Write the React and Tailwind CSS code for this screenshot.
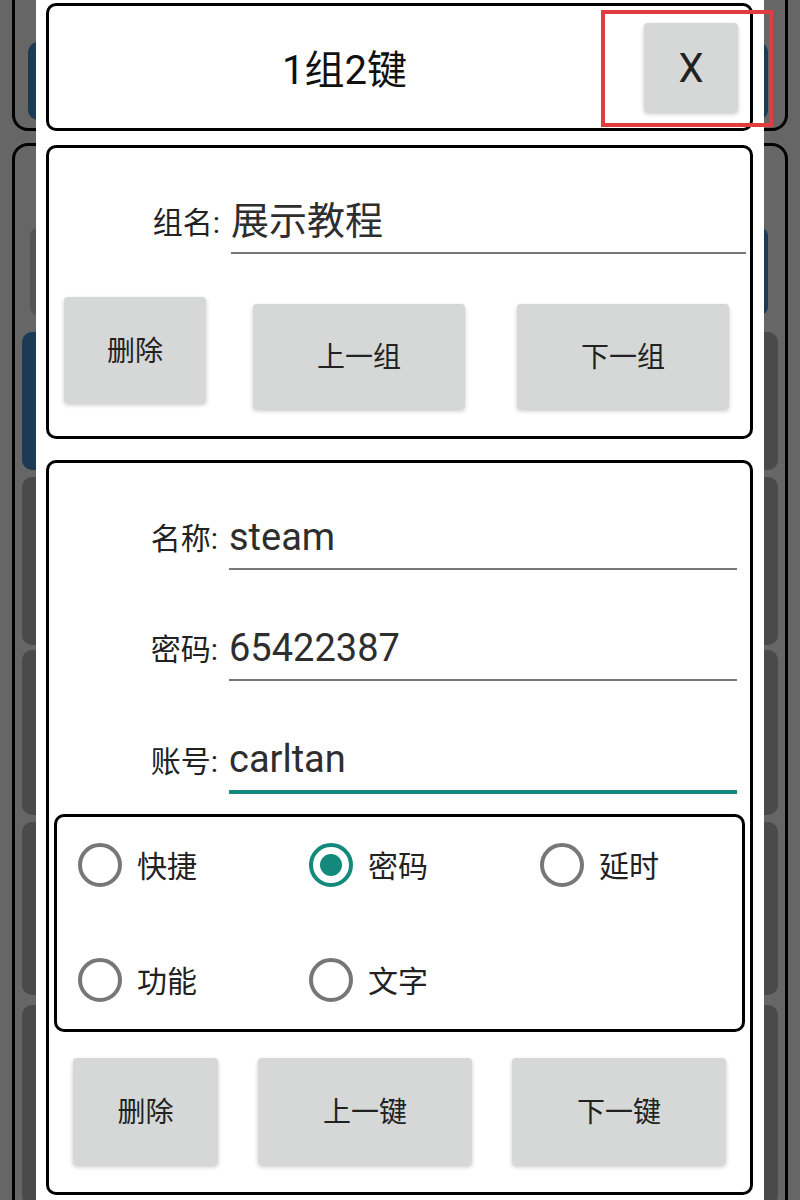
const font = "font-['Roboto','Noto_Sans_CJK_SC',sans-serif]";

function GrayButton({ className = '', children }) {
  return (
    <div
      className={`flex items-center justify-center rounded-[4px] bg-[#d6d8d7] pt-[3px] text-[28px] text-[#222] shadow-[0_2px_4px_rgba(0,0,0,0.22)] ${className}`}
    >
      {children}
    </div>
  );
}

function Field({ label, value, labelW, inputMr, active = false, className = '' }) {
  return (
    <div className={`flex ${active ? 'h-[74px]' : 'h-[72px]'} ${className}`}>
      <div className="flex items-center justify-end pt-[8px] text-[30px] text-[#222]" style={{ width: labelW }}>
        {label}:
      </div>
      <div
        className={`ml-[11px] flex flex-1 items-center pt-[8px] text-[38px] text-[#2e2e2e] ${
          active ? 'border-b-4 border-[#13897b]' : 'border-b-2 border-[#777]'
        }`}
        style={{ marginRight: inputMr }}
      >
        {value}
      </div>
    </div>
  );
}

function Radio({ label, checked = false }) {
  return (
    <div className="flex h-[44px] items-center">
      <div
        className={`flex h-[44px] w-[44px] items-center justify-center rounded-full border-4 ${
          checked ? 'border-[#13897b]' : 'border-[#777]'
        }`}
      >
        {checked && <div className="h-[22px] w-[22px] rounded-full bg-[#13897b]" />}
      </div>
      <span className="ml-[15px] pt-[2px] text-[30px] text-[#222]">{label}</span>
    </div>
  );
}

// dimmed page that sits behind the dialog
function BackgroundPage() {
  return (
    <div className="flex flex-col px-[12px]">
      <div className="mt-[-20px] flex h-[151px] gap-5 rounded-[16px] border-[3px] border-black pl-[13px] pr-[17px] pt-[59px]">
        <div className="h-[78px] flex-1 rounded-[10px] bg-[#1b3a56]" />
        <div className="h-[78px] flex-1 rounded-[10px] bg-[#1b3a56]" />
      </div>
      <div className="mt-[12px] flex h-[1100px] flex-col rounded-[16px] border-[3px] border-black px-[7px] pt-[82px]">
        <div className="flex h-[87px] gap-5 pl-[8px] pr-[10px]">
          <div className="flex-1 rounded-[8px] bg-[#555]" />
          <div className="flex-1 rounded-[8px] bg-[#1b3a56]" />
        </div>
        <div className="mt-[17px] flex h-[138px] gap-5">
          <div className="flex-1 rounded-[10px] bg-[#1b3a56]" />
          <div className="flex-1 rounded-[10px] bg-[#4b4a49]" />
        </div>
        <div className="mt-[7px] h-[168px] rounded-[10px] bg-[#4b4a49]" />
        <div className="mt-[5px] h-[165px] rounded-[10px] bg-[#4b4a49]" />
        <div className="mt-[7px] h-[173px] rounded-[10px] bg-[#4b4a49]" />
        <div className="mt-[10px] h-[200px] rounded-[10px] bg-[#4b4a49]" />
      </div>
    </div>
  );
}

export default function App() {
  return (
    <div className={`relative h-[1200px] w-[800px] overflow-hidden bg-[#666] ${font}`}>
      <BackgroundPage />

      {/* dialog */}
      <div className="absolute left-[36px] top-0 flex h-[1200px] w-[728px] flex-col bg-white pl-[10px] pr-[11px] pt-[3px]">
        {/* title bar */}
        <div className="flex h-[128px] items-center rounded-[10px] border-[3px] border-black">
          <div className="flex flex-1 justify-center pt-[7px] text-[40px] text-[#111]">1组2键</div>
          <GrayButton className="ml-1 mr-[12px] h-[89px] w-[94px] !text-[40px]">X</GrayButton>
        </div>

        {/* group card */}
        <div className="mt-[14px] flex h-[294px] flex-col rounded-[10px] border-[3px] border-black pt-[34px]">
          <Field label="组名" value="展示教程" labelW={171} inputMr={4} />
          <div className="mt-[43px] flex items-start">
            <GrayButton className="ml-[15px] h-[106px] w-[142px]">删除</GrayButton>
            <GrayButton className="ml-[47px] mt-[7px] h-[105px] w-[212px]">上一组</GrayButton>
            <GrayButton className="ml-[52px] mt-[7px] h-[105px] w-[212px]">下一组</GrayButton>
          </div>
        </div>

        {/* key card */}
        <div className="mt-[21px] flex h-[735px] flex-col rounded-[10px] border-[3px] border-black pt-[35px]">
          <Field label="名称" value="steam" labelW={169} inputMr={13} />
          <Field label="密码" value="65422387" labelW={169} inputMr={13} className="mt-[39px]" />
          <Field label="账号" value="carltan" labelW={169} inputMr={13} active className="mt-[39px]" />

          <div className="mx-[5px] mt-[20px] h-[218px] rounded-[10px] border-[3px] border-black pl-[21px] pt-[26px]">
            <div className="grid grid-cols-[231px_231px_1fr] gap-y-[71px]">
              <Radio label="快捷" />
              <Radio label="密码" checked />
              <Radio label="延时" />
              <Radio label="功能" />
              <Radio label="文字" />
            </div>
          </div>

          <div className="mt-[26px] flex gap-[40px] pl-[24px]">
            <GrayButton className="h-[107px] w-[145px]">删除</GrayButton>
            <GrayButton className="h-[107px] w-[214px]">上一键</GrayButton>
            <GrayButton className="h-[107px] w-[214px]">下一键</GrayButton>
          </div>
        </div>
      </div>

      {/* red highlight around close button */}
      <div className="absolute left-[601px] top-[10px] h-[117px] w-[172px] border-4 border-[#e23c3f]" />
    </div>
  );
}
